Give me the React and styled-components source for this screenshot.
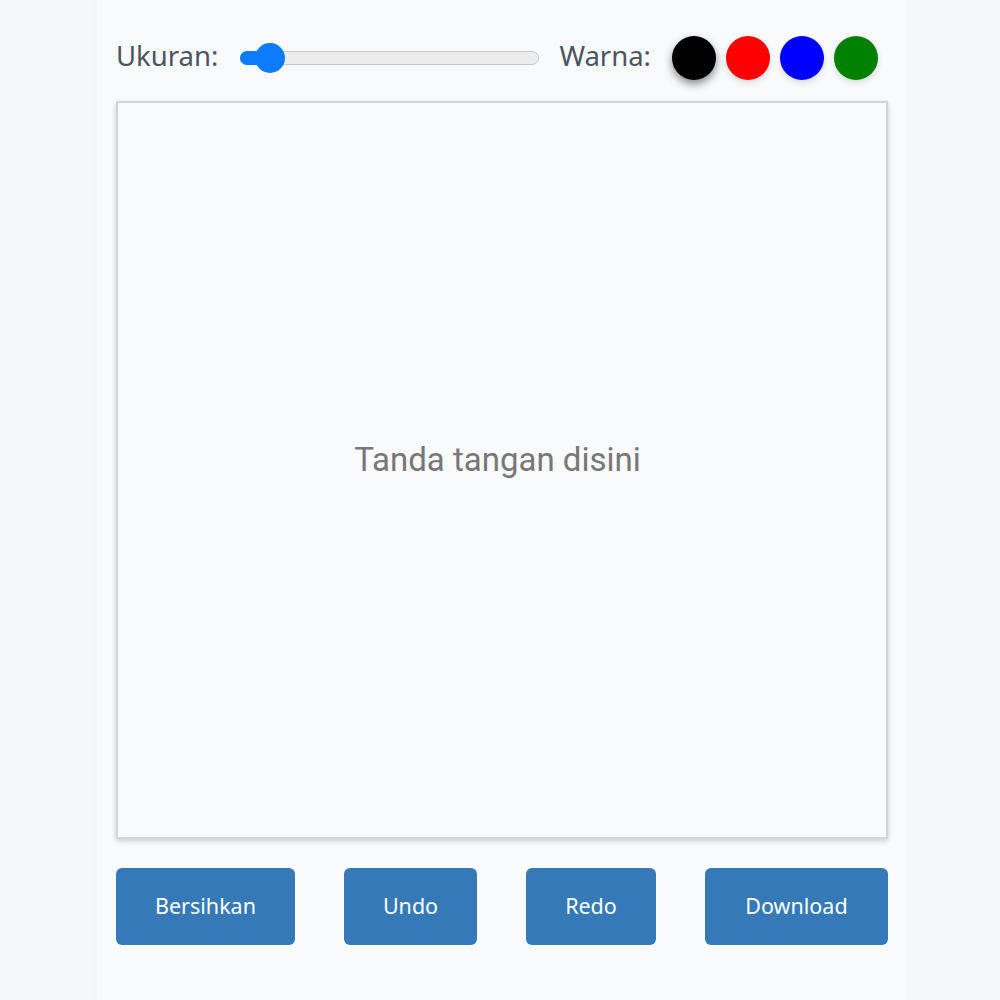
import React, { useState } from "react";
import styled, { createGlobalStyle } from "styled-components";

const Global = createGlobalStyle`
  html, body { margin: 0; padding: 0; background: #f6f7f9; }
  * { box-sizing: border-box; }
`;

const Card = styled.div`
  width: 810px;
  min-height: 1000px;
  margin-left: 97px;
  background: #f9fafc;
  box-shadow: 0 0 10px rgba(0, 0, 0, 0.02);
  padding: 36px 19px 0 19px;
  display: flex;
  flex-direction: column;
  font-family: "Noto Sans", "Open Sans", sans-serif;
`;

const Toolbar = styled.div`
  display: flex;
  align-items: center;
  height: 44px;
`;

const Label = styled.span`
  font-size: 27.5px;
  color: #4b5561;
  margin-right: ${(p) => p.$gap}px;
  margin-bottom: 4px;
  line-height: 1;
`;

const Slider = styled.div`
  position: relative;
  width: 299px;
  height: 14px;
  margin-right: 20px;
  margin-left: -1px;
  border: 1px solid #c9c9c9;
  border-radius: 7px;
  background: #ececec;
`;

const Fill = styled.div`
  position: absolute;
  left: -1px;
  top: -1px;
  bottom: -1px;
  border-radius: 7px;
  background: #0d7bfd;
`;

const Thumb = styled.div`
  position: absolute;
  top: 50%;
  width: 30px;
  height: 30px;
  margin-left: -15px;
  margin-top: -15px;
  border-radius: 50%;
  background: #0d7bfd;
`;

const Swatches = styled.div`
  display: flex;
  gap: 10px;
  margin-left: -1px;
`;

const Swatch = styled.div`
  width: 44px;
  height: 44px;
  border-radius: 50%;
  background: ${(p) => p.$color};
  box-shadow: ${(p) =>
    p.$active ? "0 4px 8px rgba(0,0,0,0.45)" : "0 3px 6px rgba(0,0,0,0.12)"};
`;

const Canvas = styled.div`
  margin-top: 21px;
  height: 738px;
  width: 772px;
  border: 2px solid #d4d4d4;
  background: #f9fafc;
  box-shadow: 0 2px 5px rgba(0, 0, 0, 0.18);
  display: flex;
  align-items: center;
  justify-content: center;
`;

const Placeholder = styled.span`
  font-family: Roboto, "Noto Sans", sans-serif;
  font-size: 33px;
  color: #777777;
  margin-bottom: 22px;
  margin-right: 9px;
`;

const Actions = styled.div`
  margin-top: 29px;
  display: flex;
  justify-content: space-between;
  width: 772px;
`;

const Button = styled.button`
  height: 77px;
  width: ${(p) => p.$w}px;
  border: none;
  border-radius: 6px;
  background: #3579b6;
  color: #ffffff;
  font-family: "Noto Sans", "Open Sans", sans-serif;
  font-size: 21.5px;
  padding: 0 0 2px 0;
  cursor: pointer;
`;

const colors = ["#000000", "#ff0000", "#0000ff", "#008000"];

export default function App() {
  const [active, setActive] = useState(0);
  const pct = 0.095;
  return (
    <>
      <Global />
      <Card>
        <Toolbar>
          <Label $gap={23}>Ukuran:</Label>
          <Slider>
            <Fill style={{ width: `${pct * 100 + 1}%` }} />
            <Thumb style={{ left: `${pct * 100}%` }} />
          </Slider>
          <Label $gap={22}>Warna:</Label>
          <Swatches>
            {colors.map((c, i) => (
              <Swatch key={c} $color={c} $active={i === active} onClick={() => setActive(i)} />
            ))}
          </Swatches>
        </Toolbar>
        <Canvas>
          <Placeholder>Tanda tangan disini</Placeholder>
        </Canvas>
        <Actions>
          <Button $w={179}>Bersihkan</Button>
          <Button $w={133}>Undo</Button>
          <Button $w={130}>Redo</Button>
          <Button $w={183}>Download</Button>
        </Actions>
      </Card>
    </>
  );
}
